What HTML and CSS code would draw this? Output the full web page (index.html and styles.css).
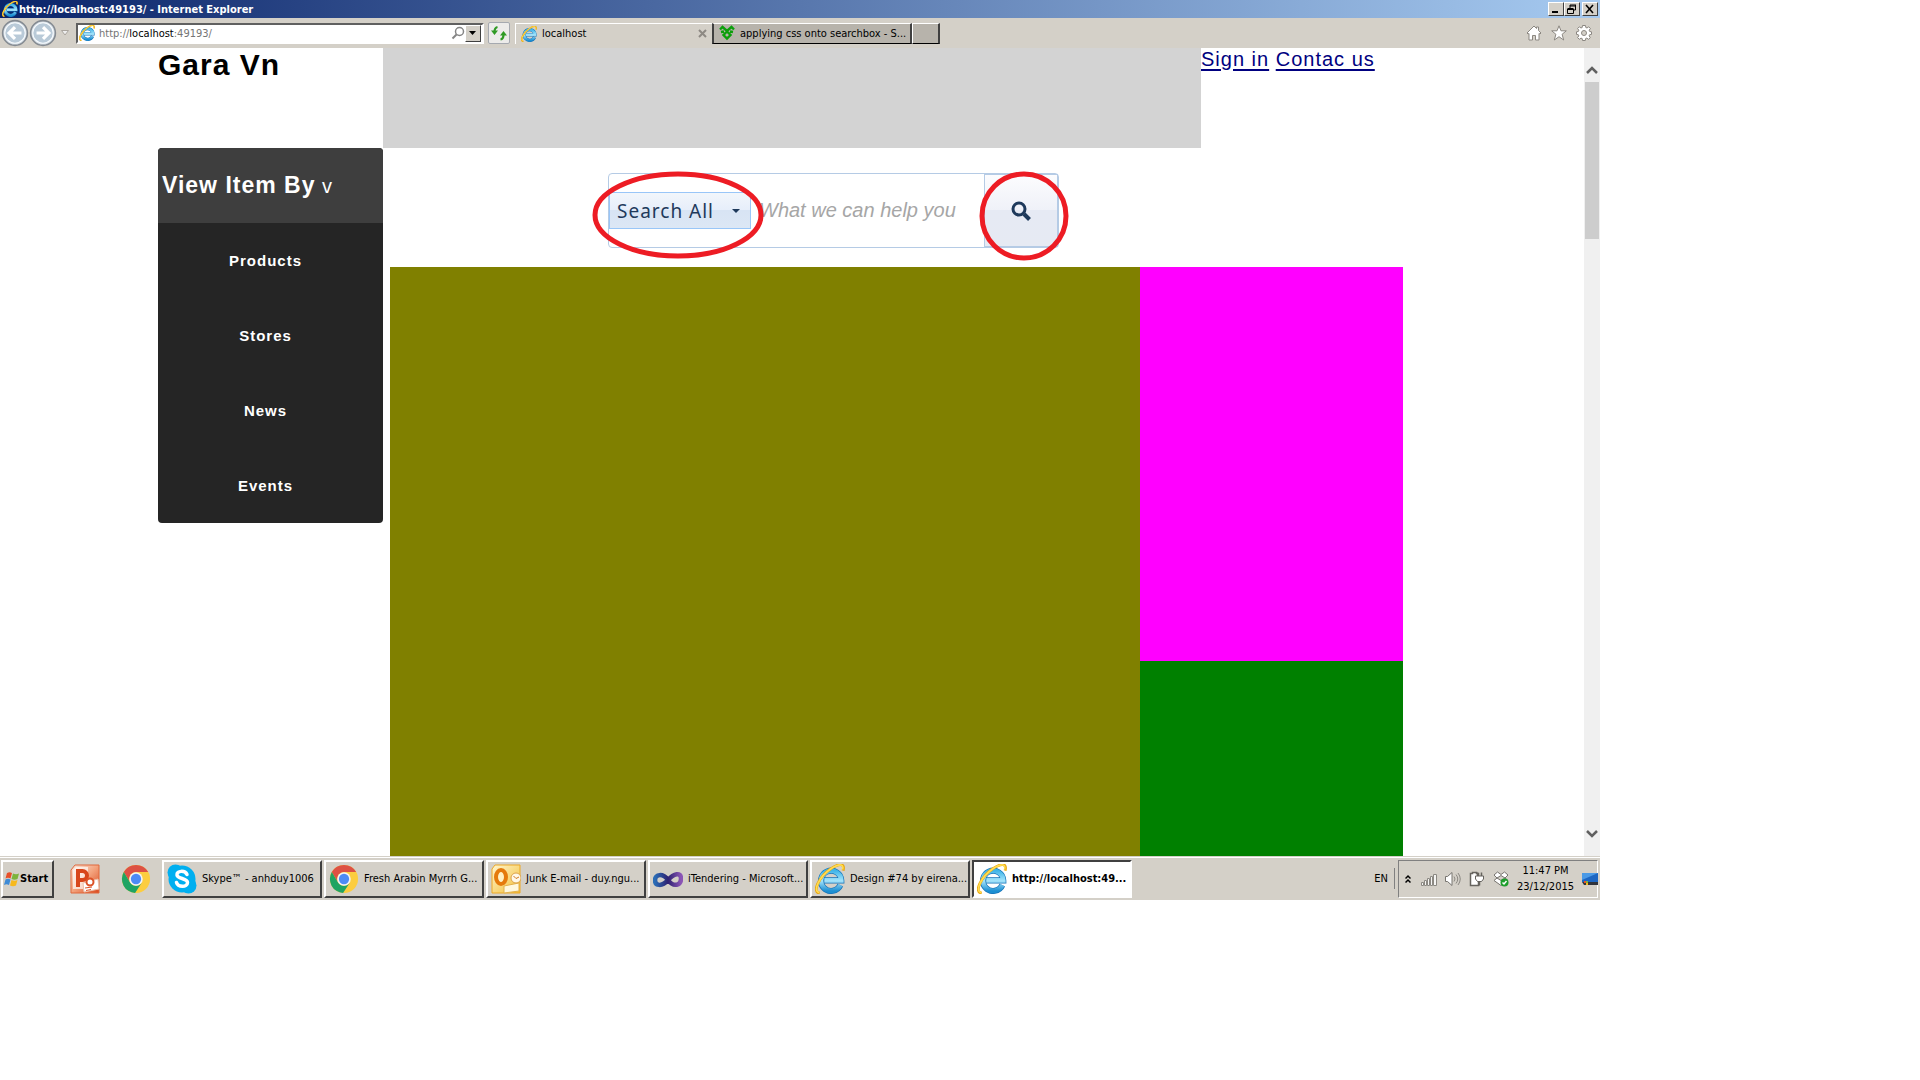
FILE: index.html
```html
<!DOCTYPE html>
<html lang="en">
<head>
    <meta charset="utf-8">
    <title>Gara Vn</title>
    <link rel="stylesheet" href="styles.css">
</head>
<body>
    <svg class="symbols" aria-hidden="true">
        <defs>
            <linearGradient id="ie-blue" x1="0" y1="0" x2="0" y2="1">
                <stop offset="0" stop-color="#3fb4e8"/>
                <stop offset=".5" stop-color="#a5e4fb"/>
                <stop offset="1" stop-color="#1c8fd2"/>
            </linearGradient>
            <linearGradient id="orange" x1="0" y1="0" x2="1" y2="1">
                <stop offset="0" stop-color="#fbe9df"/>
                <stop offset=".5" stop-color="#f3a27c"/>
                <stop offset="1" stop-color="#d9481c"/>
            </linearGradient>
            <linearGradient id="gold" x1="0" y1="0" x2="1" y2="1">
                <stop offset="0" stop-color="#fff6cf"/>
                <stop offset="1" stop-color="#f3bd35"/>
            </linearGradient>
            <linearGradient id="violet" x1="0" y1="0" x2="1" y2="0">
                <stop offset="0" stop-color="#2a6cb5"/>
                <stop offset=".5" stop-color="#2d2272"/>
                <stop offset="1" stop-color="#8b55b5"/>
            </linearGradient>
        </defs>
        <symbol id="ie" viewBox="0 0 32 32">
            <path d="M27 22.500a10.800 10.800 0 1 1 1-5H10" fill="none" stroke="#1673b8" stroke-width="6.500"/>
            <path d="M27 22.500a10.800 10.800 0 1 1 1-5H10" fill="none" stroke="url(#ie-blue)" stroke-width="5"/>
            <path d="M5 31C-4 30 5 13 17 5c9-6 15-6 13 2" fill="none" stroke="#e9a50c" stroke-width="3"/>
            <path d="M4.500 30.500C-3 29 5 13 17 5c8-5 14-6 12.500 1" fill="none" stroke="#ffdc52" stroke-width="1.800"/>
        </symbol>
        <symbol id="chrome" viewBox="0 0 32 32">
            <circle cx="16" cy="16" r="15" fill="#fccd3f"/>
            <path d="M3 8.500A15 15 0 0 1 29 8.500H16a7.500 7.500 0 0 0-6.500 11z" fill="#dd5144"/>
            <path d="M3 8.500A15 15 0 0 0 15 31l7.500-11.500a7.500 7.500 0 0 1-13 0z" fill="#1fa463"/>
            <circle cx="16" cy="16" r="7.200" fill="#f4f4f4"/>
            <circle cx="16" cy="16" r="5.500" fill="#4d8bf5"/>
        </symbol>
    </svg>

    <div class="window">
        <div class="title-bar">
            <svg class="icon16"><use href="#ie"/></svg>
            <span class="title-text">http://localhost:49193/ - Internet Explorer</span>
            <button class="win-btn" aria-label="Minimize"><svg width="12" height="10"><path d="M2 8h6" stroke="#000" stroke-width="2"/></svg></button>
            <button class="win-btn" aria-label="Restore"><svg width="12" height="10"><path d="M4 1h6M4 2h6M4 1v3M9.500 1v5H8M1.500 4.500h6M1.500 5.500h6M1.500 5v4.500h6V5" fill="none" stroke="#000"/></svg></button>
            <button class="win-btn win-close" aria-label="Close"><svg width="12" height="10"><path d="M2 1l7 8M9 1L2 9" stroke="#000" stroke-width="1.600"/></svg></button>
        </div>

        <div class="toolbar">
            <button class="nav-btn" aria-label="Back"><svg viewBox="0 0 26 26"><circle cx="13" cy="13" r="11.500" fill="#d5dee7" stroke="#858b92" stroke-width="1.500"/><circle cx="13" cy="13" r="9.500" fill="#b9cad8" stroke="#f8fbfd"/><path d="M13 7.500L7.500 13l5.500 5.500M8 13h11" fill="none" stroke="#fff" stroke-width="3"/></svg></button>
            <button class="nav-btn" aria-label="Forward"><svg viewBox="0 0 26 26"><circle cx="13" cy="13" r="11.500" fill="#d5dee7" stroke="#858b92" stroke-width="1.500"/><circle cx="13" cy="13" r="9.500" fill="#b9cad8" stroke="#f8fbfd"/><path d="M13 7.500l5.500 5.500-5.500 5.500M18 13H7" fill="none" stroke="#fff" stroke-width="3"/></svg></button>
            <button class="history-btn" aria-label="Recent pages"><svg width="8" height="6"><path d="M.5.500h7L4 5z" fill="#eee" stroke="#aaa59e"/></svg></button>
            <div class="address">
                <svg class="icon16"><use href="#ie"/></svg>
                <a class="url" href="#">http://<b>localhost</b>:49193/</a>
                <svg width="14" height="14"><circle cx="8.500" cy="5.500" r="4" fill="none" stroke="#858585" stroke-width="1.500"/><path d="M5.500 8.500L1.500 12.500" stroke="#858585" stroke-width="2"/></svg>
                <button class="drop-btn" aria-label="Show addresses"><svg width="8" height="4"><path d="M0 0h7L3.500 4z"/></svg></button>
            </div>
            <button class="refresh" aria-label="Refresh"><svg width="16" height="16"><path d="M6.500 2C4 2.500 3.500 4 3.500 7M9.500 14.500c2.500-.5 3-2 3-5" fill="none" stroke="#2f9a25" stroke-width="2.200"/><path d="M0 5.500h7L3.500 10zM9 10.500h7L12.500 6z" fill="#2f9a25"/></svg></button>
            <div class="tabs">
                <div class="tab tab-active">
                    <svg class="icon16"><use href="#ie"/></svg>
                    <span>localhost</span>
                    <button class="tab-close" aria-label="Close tab"><svg width="9" height="9"><path d="M1 1l7 7M8 1L1 8" stroke="#8d8983" stroke-width="2"/></svg></button>
                </div>
                <div class="tab tab-other">
                    <svg class="icon16" viewBox="0 0 16 16"><path d="M1 4.500L3.500 2 8 6l4.500-4L15 4.500M2 7l3-.5M14 7l-3-.5M8 6.500L4.500 10 8 13.500l3.500-3.500z" fill="none" stroke="#0b9f0b" stroke-width="2.400"/></svg>
                    <span>applying css onto searchbox - S...</span>
                </div>
                <button class="tab tab-new" aria-label="New tab"></button>
            </div>
            <div class="tools">
                <svg class="icon16" viewBox="0 0 16 16"><path d="M1 8l7-7 2.500 2.500V2h2v3.500L15 8l-1 1-1-.5V15H9.500v-4.500h-3V15H3V8.500L2 9z" fill="#fff" stroke="#8b8781"/></svg>
                <svg class="icon16" viewBox="0 0 16 16"><path d="M8 .8l2 5h5.300l-4.200 3.500 1.600 5.700L8 11.700 3.300 15l1.600-5.700L.7 5.800H6z" fill="#fff" stroke="#8b8781"/></svg>
                <svg class="icon16" viewBox="0 0 16 16"><path d="M6.500.5h3l.3 2 1.200.5 1.700-1.200 1.700 1.700L13.200 5.200l.5 1.300 1.800.3v2.600l-1.900.3-.5 1.200 1.200 1.700-1.800 1.700-1.700-1.200-1.200.5-.3 1.900H6.500l-.3-1.900-1.200-.5-1.700 1.200-1.700-1.700 1.200-1.700-.5-1.200-1.800-.3V6.800l1.800-.3.5-1.300-1.200-1.700 1.700-1.700L5 3l1.200-.5z" fill="#fff" stroke="#8b8781"/><circle cx="8" cy="8" r="2.500" fill="#d4d0c8" stroke="#8b8781"/></svg>
            </div>
        </div>

        <div class="viewport">
            <div class="page">
                <header class="header">
                    <h1 class="logo">Gara Vn</h1>
                    <div class="banner"></div>
                    <div class="links"><a href="#">Sign in</a> <a href="#">Contac us</a></div>
                </header>
                <div class="content">
                    <nav class="menu">
                        <div class="menu-title"><strong>View Item By</strong> v</div>
                        <a href="#">Products</a>
                        <a href="#">Stores</a>
                        <a href="#">News</a>
                        <a href="#">Events</a>
                    </nav>
                    <main class="main">
                        <form class="search">
                            <div class="select-wrap">
                                <select class="search-type" aria-label="Search in">
                                    <option>Search All</option>
                                </select>
                                <svg class="caret" width="8" height="4"><path d="M0 0h8L4 4z" fill="#1e395b"/></svg>
                            </div>
                            <input class="search-text" type="text" placeholder="What we can help you" aria-label="Search text">
                            <button class="search-btn" type="button" aria-label="Search"><svg width="20" height="20"><circle cx="8" cy="8" r="6" fill="none" stroke="#1e395b" stroke-width="3"/><path d="M13 13l5.500 5.500" stroke="#1e395b" stroke-width="4"/></svg></button>
                            <!-- red marks around the two controls -->
                            <svg class="marks" width="476" height="90"><ellipse cx="85" cy="43" rx="83" ry="41"/><ellipse cx="431" cy="44" rx="42" ry="42"/></svg>
                        </form>
                        <div class="blocks">
                            <div class="block-main"></div>
                            <div class="block-side">
                                <div class="block-top"></div>
                                <div class="block-bottom"></div>
                            </div>
                        </div>
                    </main>
                </div>
            </div>
            <div class="scrollbar">
                <svg width="12" height="8"><path d="M1 7l5-5 5 5" fill="none" stroke="#606060" stroke-width="2.500"/></svg>
                <div class="thumb"></div>
                <svg class="scroll-down" width="12" height="8"><path d="M1 1l5 5 5-5" fill="none" stroke="#606060" stroke-width="2.500"/></svg>
            </div>
        </div>

        <div class="taskbar">
            <button class="start">
                <svg class="icon16" viewBox="0 0 16 16"><path d="M3 2c2-1 3-1 5 0L6.500 7.500c-2-1-3-1-5 0z" fill="#e8502a"/><path d="M9 2.500c2 1 4 1 6 0L13.500 8c-2 1-4 1-6 0z" fill="#7db43c"/><path d="M1.500 8.500c2-1 3-1 5 0L5 14c-2-1-3-1-5 0z" fill="#3f8bd6"/><path d="M7.500 9c2 1 4 1 6 0L12 14.500c-2 1-4 1-6 0z" fill="#f7b91d"/></svg>
                Start
            </button>
            <div class="quick">
                <svg class="icon30" viewBox="0 0 30 30"><path d="M5 1h24v28H1V6z" fill="url(#orange)" stroke="#e0693d"/><path d="M3 6l3-3h12v22H3z" fill="#fff" opacity=".65"/><path d="M8 23V7h4.500a4.500 4.500 0 0 1 0 9H8" fill="none" stroke="#d8461b" stroke-width="4"/><path d="M13 19l15-4 1 10-15 3z" fill="#fff" stroke="#ecc0aa"/><circle cx="20" cy="18" r="3.500" fill="#fff" stroke="#dc5227" stroke-width="2"/><path d="M15 24l7-1M16 26.500l5-1" stroke="#dc5227"/></svg>
                <svg class="icon30"><use href="#chrome"/></svg>
            </div>
            <div class="tasks">
                <button class="task">
                    <svg class="icon30" viewBox="0 0 30 30"><circle cx="15" cy="15" r="13.500" fill="#00aff0"/><circle cx="8.500" cy="8.500" r="8" fill="#00aff0"/><circle cx="21.500" cy="21.500" r="8" fill="#00aff0"/><path d="M20 10.500C18 6 9.500 6.500 10 11c.4 4 10.500 3 10.500 7.500 0 5-9.500 5-11 0" fill="none" stroke="#fff" stroke-width="3.500" stroke-linecap="round"/></svg>
                    <span>Skype™ - anhduy1006</span>
                </button>
                <button class="task">
                    <svg class="icon30"><use href="#chrome"/></svg>
                    <span>Fresh Arabin Myrrh G...</span>
                </button>
                <button class="task">
                    <svg class="icon30" viewBox="0 0 30 30"><path d="M4 1h25v28H1V5z" fill="url(#gold)" stroke="#eda824"/><path d="M13 22l15-3v8l-15 2z" fill="#fff8df" stroke="#e3b24d"/><ellipse cx="10" cy="13" rx="5" ry="7" fill="#fff1c5" stroke="#e57a0c" stroke-width="4"/><circle cx="25" cy="14" r="5" fill="#fff8e8" stroke="#dca34b"/><path d="M22.500 12l2.500 2.500 3-1.500" fill="none" stroke="#d07a22"/></svg>
                    <span>Junk E-mail - duy.ngu...</span>
                </button>
                <button class="task">
                    <svg class="icon30" viewBox="0 0 30 30"><path d="M15 16C10 9 2 10 2 16s7 7 13 0S28 8 28 14.500s-7 9.500-13 1.500z" fill="none" stroke="url(#violet)" stroke-width="4.500"/></svg>
                    <span>iTendering - Microsoft...</span>
                </button>
                <button class="task">
                    <svg class="icon30"><use href="#ie"/></svg>
                    <span>Design #74 by eirena...</span>
                </button>
                <button class="task task-active">
                    <svg class="icon30"><use href="#ie"/></svg>
                    <span>http://localhost:49...</span>
                </button>
            </div>
            <span class="lang">EN</span>
            <div class="tray">
                <svg width="6" height="10"><path d="M.5 4.500L3 2l2.500 2.500M.5 8.500L3 6l2.500 2.500" fill="none" stroke="#000" stroke-width="1.500"/></svg>
                <svg class="icon16 tray-first" viewBox="0 0 16 16"><path d="M.5 11.500h2v3h-2zM3.500 9.500h2v5h-2zM6.500 7.500h2v7h-2zM9.500 5.500h2v9h-2zM12.500 3.500h3v11h-3z" fill="#f5f5f3" stroke="#8b8882"/></svg>
                <svg class="icon16" viewBox="0 0 16 16"><path d="M.5 5.500h2L7 1.500v13L2.500 10.500h-2z" fill="#fff" stroke="#77746f"/><path d="M9 5.500q2 2.500 0 5M11 3.500q3.500 4.500 0 9M13 2q4.500 6 0 12" fill="none" stroke="#8b8882"/></svg>
                <svg class="icon16" viewBox="0 0 16 16"><path d="M1.500 2.500h2v-1h4v1h2v12h-8z" fill="#fff" stroke="#66635e" stroke-width="1.500"/><path d="M8.500 1.500V5M12.500 1.500V5M10.500 10v4.500" stroke="#66635e" stroke-width="1.500"/><path d="M6.500 5h8v3l-2 2.500h-4L6.500 8z" fill="#fff" stroke="#66635e"/></svg>
                <svg class="icon16" viewBox="0 0 16 16"><path d="M4.500 1L8 3.500 11.500 1 15 4l-3 3 3 2.500-7 5-7-5L4 7 1 4zM4 7l4 2.500L12 7 8 4.500z" fill="#fff" stroke="#77746f"/><circle cx="11.500" cy="11.500" r="4" fill="#1e9e2c"/><path d="M9.500 11.500l1.500 1.500 2.500-3" fill="none" stroke="#fff" stroke-width="1.500"/></svg>
                <div class="clock">11:47 PM<br>23/12/2015</div>
                <svg class="icon16" viewBox="0 0 16 16"><path d="M0 2h16v9H0z" fill="#1d66c2"/><path d="M0 2h16L0 9z" fill="#4b9ae6"/><path d="M0 11h16v3H2z" fill="#30343c"/><path d="M2 10h2v2H2z" fill="#e8502a"/><path d="M4 10h2v2H4z" fill="#7db43c"/><path d="M4 12h2v2H4z" fill="#f7b91d"/></svg>
            </div>
        </div>
    </div>
</body>
</html>
```

FILE: styles.css
```css
* {
    box-sizing: border-box;
}

body {
    margin: 0;
    background-color: #ffffff;
    font-family: 'Liberation Sans', Arial, sans-serif;
}

button {
    padding: 0;
    border: none;
    background: none;
    font: inherit;
    color: inherit;
}

svg {
    display: block;
    flex: none;
}

.symbols {
    position: absolute;
    width: 0;
    height: 0;
}

.icon16 {
    width: 16px;
    height: 16px;
}

.icon30 {
    width: 30px;
    height: 30px;
}

/* Browser window */
.window {
    display: flex;
    flex-direction: column;
    width: calc(100% * 5 / 6);
    height: calc(100vh * 5 / 6);
}

.title-bar,
.toolbar,
.taskbar {
    flex: none;
    font-family: 'DejaVu Sans Condensed', 'DejaVu Sans', Tahoma, sans-serif;
    font-size: 11px;
    white-space: nowrap;
}

.title-bar {
    display: flex;
    align-items: center;
    height: 18px;
    padding: 0 2px;
    background: linear-gradient(to right, #0a246a, #a6caf0);
    color: #ffffff;
    font-weight: bold;
}

.title-text {
    flex: 1;
    padding-left: 1px;
}

.win-btn,
.drop-btn {
    display: flex;
    align-items: center;
    justify-content: center;
    width: 16px;
    height: 14px;
    border: 1px solid;
    border-color: #ffffff #404040 #404040 #ffffff;
    background-color: #d4d0c8;
}

.win-close {
    margin-left: 2px;
}

.toolbar {
    display: flex;
    align-items: center;
    height: 30px;
    padding: 0 8px 0 1px;
    background-color: #d4d0c8;
}

.nav-btn {
    width: 28px;
    height: 28px;
}

.history-btn {
    margin: 0 7px 0 4px;
}

.address {
    display: flex;
    align-items: center;
    width: 408px;
    height: 21px;
    padding: 0 1px;
    border: 2px solid;
    border-color: #606060 #ffffff #ffffff #606060;
    background-color: #ffffff;
}

.url {
    flex: 1;
    padding-left: 4px;
    color: #757575;
    text-decoration: none;
}

.url b {
    color: #000000;
    font-weight: normal;
}

.drop-btn {
    height: 17px;
}

.refresh {
    display: flex;
    align-items: center;
    justify-content: center;
    width: 22px;
    height: 22px;
    margin: 0 5px 0 4px;
    border: 1px solid #a5a9b0;
    border-radius: 2px;
    background-color: #ecebea;
}

.tabs {
    display: flex;
    flex: 1;
}

.tab {
    display: flex;
    align-items: center;
    gap: 5px;
    height: 21px;
    padding: 0 5px;
    border-top: 1px solid #ffffff;
    border-left: 1px solid #ffffff;
}

.tab-active {
    width: 197px;
}

.tab-close {
    margin-left: auto;
}

.tab-other,
.tab-new {
    border-right: 2px solid #404040;
    border-bottom: 1px solid #000000;
    background-color: #b7b3ab;
}

.tab-other {
    width: 200px;
    border-left: 2px solid #404040;
}

.tab-new {
    width: 28px;
}

.tools {
    display: flex;
    gap: 9px;
}

/* Web page */
.viewport {
    display: flex;
    flex: 1;
    min-height: 0;
}

.page {
    display: flex;
    flex: 1;
    flex-direction: column;
    padding: 0 181px 0 calc(10% - 2px);
    letter-spacing: 1px;
}

.header {
    display: flex;
    height: 100px;
}

.logo {
    width: 225px;
    margin: 0;
    font-size: 30px;
    line-height: 34px;
}

.banner {
    flex: 1;
    background-color: #d3d3d3;
}

.links {
    width: 202px;
    font-size: 20px;
    line-height: 23px;
    white-space: nowrap;
}

.links a {
    color: #000080;
    text-underline-offset: 3px;
}

.content {
    display: flex;
    flex: 1;
    min-height: 0;
}

.menu {
    align-self: flex-start;
    width: 225px;
    overflow: hidden;
    border-radius: 4px;
    background-color: #252525;
    color: #ffffff;
    line-height: 75px;
}

.menu-title {
    height: 75px;
    padding-left: 4px;
    background-color: #3e3e3e;
    font-size: 20px;
}

.menu-title strong {
    font-size: 23px;
}

.menu a {
    display: block;
    padding-right: 10px;
    color: #ffffff;
    font-size: 15px;
    font-weight: bold;
    text-align: center;
    text-decoration: none;
}

.main {
    display: flex;
    flex: 1;
    flex-direction: column;
    padding-left: 7px;
}

.search {
    position: relative;
    display: flex;
    align-items: center;
    width: 451px;
    height: 75px;
    margin: 25px 0 19px 218px;
    border: 1px solid #b5cbe5;
    border-radius: 4px;
}

.select-wrap {
    position: relative;
}

.search-type {
    width: 142px;
    height: 37px;
    padding: 0 7px;
    appearance: none;
    border: 1px solid #99c6f8;
    border-radius: 0;
    background: linear-gradient(#f2f6fb, #e6eefa 50%, #d8e4f4 50%, #dce7f5);
    color: #1e395b;
    font-family: 'Noto Sans', 'Segoe UI', sans-serif;
    font-size: 19px;
    letter-spacing: 1px;
}

.caret {
    position: absolute;
    top: 17px;
    right: 11px;
}

.search-text {
    flex: 1;
    min-width: 0;
    padding: 0 8px;
    border: none;
    background: none;
    font-family: inherit;
    font-size: 20px;
    font-style: italic;
}

.search-text::placeholder {
    color: #a6a6a6;
}

.search-btn {
    display: flex;
    align-items: center;
    justify-content: center;
    align-self: stretch;
    width: 74px;
    border: 1px solid #b5cbe5;
    background: linear-gradient(#fcfcfe, #eff1f8 50%, #e6eaf4 50%, #e6eaf3);
}

.marks {
    position: absolute;
    top: -2px;
    left: -16px;
    overflow: visible;
    fill: none;
    stroke: #ed1c24;
    stroke-width: 5px;
    pointer-events: none;
}

.blocks {
    display: flex;
    flex: 1;
}

.block-main {
    flex: 1;
    background-color: #808000;
}

.block-side {
    display: flex;
    flex-direction: column;
    width: 263px;
}

.block-top {
    height: 394px;
    background-color: #ff00ff;
}

.block-bottom {
    flex: 1;
    background-color: #008000;
}

.scrollbar {
    display: flex;
    flex-direction: column;
    align-items: center;
    width: 16px;
    padding: 18px 1px;
    background-color: #f0f0f0;
}

.thumb {
    width: 14px;
    height: 157px;
    margin-top: 8px;
    background-color: #cdcdcd;
}

.scroll-down {
    margin-top: auto;
}

/* Taskbar */
.taskbar {
    display: flex;
    align-items: center;
    height: 44px;
    padding: 2px 2px 2px 1px;
    border-top: 1px solid #d4d0c8;
    background-color: #d4d0c8;
    box-shadow: inset 0 1px #ffffff;
}

.start,
.task {
    display: flex;
    align-items: center;
    height: 38px;
    border: 2px solid;
    border-color: #ffffff #404040 #404040 #ffffff;
}

.start {
    width: 53px;
    padding-left: 1px;
    font-weight: bold;
}

.quick {
    display: flex;
    gap: 21px;
    margin: 0 11px 0 16px;
}

.tasks {
    display: flex;
    flex: 1;
    gap: 2px;
}

.task {
    width: 160px;
    padding-left: 3px;
}

.task span {
    padding-left: 5px;
}

.task-active {
    border-color: #404040 #ffffff #ffffff #404040;
    background-color: #ffffff;
    font-weight: bold;
}

.lang {
    margin-right: 3px;
    padding: 4px 6px 4px 0;
    border-right: 1px solid #808080;
}

.tray {
    display: flex;
    align-items: center;
    gap: 8px;
    width: 200px;
    height: 38px;
    padding-left: 6px;
    border: 1px solid;
    border-color: #808080 #ffffff #ffffff #808080;
}

.tray-first {
    margin-left: 2px;
}

.clock {
    flex: 1;
    line-height: 16px;
    text-align: center;
}
```
